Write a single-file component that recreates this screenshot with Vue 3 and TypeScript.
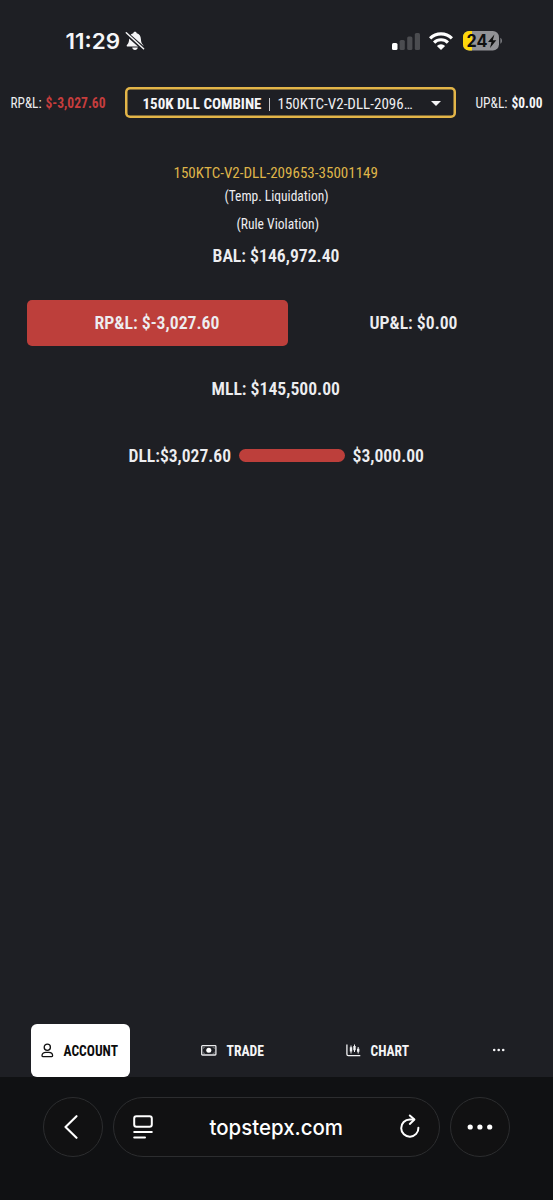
<script setup lang="ts">
import { h, type FunctionalComponent } from 'vue'

interface FitProps {
  text: string
  w: number
  size: number
}

// One line of text condensed or stretched to a known width.
const Fit: FunctionalComponent<FitProps> = (props) =>
  h('svg', { class: 'fit', width: props.w, height: 20, overflow: 'visible' }, [
    h(
      'text',
      {
        x: -0.5,
        y: 15.7,
        'font-size': props.size,
        textLength: props.w,
        lengthAdjust: 'spacingAndGlyphs',
        fill: 'currentColor',
      },
      props.text,
    ),
  ])
Fit.props = ['text', 'w', 'size']

const account = {
  id: '150KTC-V2-DLL-209653-35001149',
  shortId: '150KTC-V2-DLL-2096…',
  plan: '150K DLL COMBINE',
}
</script>

<template>
  <div class="screen">
    <header class="status">
      <Fit class="clock" text="11:29" :w="54.5" :size="21.8" />
      <svg class="bell" width="20" height="20" viewBox="0 0 20 20">
        <path d="M10 .8c-1 0-1.700.7-1.700 1.500C5.600 3 4.200 5 4.100 8c-.1 3.200-.7 4.400-2 5.700-.8.800-.4 1.800.6 1.800h14.600c1 0 1.400-1 .6-1.800-1.300-1.300-1.900-2.500-2-5.700-.1-3-1.500-5-4.200-5.700 0-.8-.7-1.500-1.700-1.500zM7.200 16.500c.2 1.500 1.300 2.500 2.800 2.500s2.600-1 2.800-2.500z" fill="#f4f4f6" />
        <path d="M1 2.200 18.800 18" stroke="#1e1f24" stroke-width="4.200" />
        <path d="M1.300 1.800 18.600 17.800" stroke="#f4f4f6" stroke-width="1.500" stroke-linecap="round" />
      </svg>
      <svg class="signal" width="28" height="18" viewBox="0 0 28 18">
        <rect x="0" y="11" width="5.500" height="7" rx="1.500" fill="#fff" />
        <g fill="#4b4c50">
          <rect x="7.600" y="8" width="5.200" height="10" rx="1.500" />
          <rect x="15.200" y="4.500" width="5.200" height="13.500" rx="1.500" />
          <rect x="22.800" y="1" width="5.200" height="17" rx="1.500" />
        </g>
      </svg>
      <svg class="wifi" width="24" height="18" viewBox="0 0 24 18">
        <g fill="none" stroke="#fff" stroke-width="3.200">
          <path d="M1.100 6.300a15.600 15.600 0 0 1 21.800 0" />
          <path d="M5.100 10.600a9.800 9.800 0 0 1 13.800 0" />
        </g>
        <path d="M12 18 7.900 14a5.800 5.800 0 0 1 8.200 0z" fill="#fff" />
      </svg>
      <svg class="battery" width="40" height="20" viewBox="0 0 40 20">
        <defs>
          <clipPath id="cell"><rect width="36" height="19.500" rx="6.200" /></clipPath>
        </defs>
        <g clip-path="url(#cell)">
          <rect width="36" height="20" fill="#929296" />
          <rect width="9" height="20" fill="#fed70b" />
        </g>
        <path d="M37.300 6.800c2.300.8 2.300 5.200 0 6z" fill="#77787c" />
        <text x="3.600" y="16.200" font-size="17.500" font-weight="700" textLength="21" lengthAdjust="spacingAndGlyphs" fill="#101010">24</text>
        <path d="m31.400 3.500-6.400 7.600h3.500l-1.500 5.800 6.300-7.700h-3.500z" fill="#101010" />
      </svg>
    </header>

    <section class="top">
      <div class="pnl left">
        <Fit text="RP&L:" :w="31" :size="13.800" />
        <Fit class="bold loss" text="$-3,027.60" :w="60" :size="13.800" />
      </div>
      <div class="select">
        <Fit class="bold" :text="account.plan" :w="119" :size="15" />
        <i class="divider"></i>
        <Fit class="short" :text="account.shortId" :w="135" :size="15" />
        <svg class="caret" width="10" height="5" viewBox="0 0 10 5"><path d="M0 0h10L5 5z" fill="#f4f4f6" /></svg>
      </div>
      <div class="pnl right">
        <Fit text="UP&L:" :w="32" :size="13.800" />
        <Fit class="bold" text="$0.00" :w="31" :size="13.800" />
      </div>
    </section>

    <main>
      <Fit class="account" :text="account.id" :w="204.500" :size="15" />
      <Fit class="note" text="(Temp. Liquidation)" :w="104" :size="13.800" />
      <Fit class="note second" text="(Rule Violation)" :w="82.500" :size="13.800" />
      <Fit class="semi bal" text="BAL: $146,972.40" :w="127" :size="17.700" />
      <div class="cards">
        <div class="card red"><Fit class="semi" text="RP&L: $-3,027.60" :w="125" :size="17.700" /></div>
        <div class="card"><Fit class="semi" text="UP&L: $0.00" :w="88" :size="17.700" /></div>
      </div>
      <Fit class="semi mll" text="MLL: $145,500.00" :w="128.500" :size="17.700" />
      <div class="dll">
        <Fit class="semi" text="DLL:$3,027.60" :w="102.500" :size="17.700" />
        <div class="bar"></div>
        <Fit class="semi" text="$3,000.00" :w="71.500" :size="17.700" />
      </div>
    </main>

    <nav>
      <div class="tab active">
        <svg width="13" height="15" viewBox="0 0 13 15" fill="none" stroke="#111" stroke-width="1.300">
          <circle cx="6.300" cy="4.200" r="3.100" />
          <path d="M1 12.800C1 10.600 2.700 9.300 4.800 9.300h3c2.100 0 3.800 1.300 3.800 3.500 0 .5-.3.800-.8.800h-9c-.5 0-.8-.3-.8-.8z" />
        </svg>
        <Fit class="bold" text="ACCOUNT" :w="54.500" :size="14" />
      </div>
      <div class="tab trade">
        <svg width="16" height="11" viewBox="0 0 16 11">
          <rect x=".7" y=".7" width="14.200" height="9.300" rx=".8" fill="none" stroke="#e9e9eb" stroke-width="1.300" />
          <circle cx="7.800" cy="5.300" r="2.500" fill="#fff" />
          <path d="M2.300 4V2.300H4M11.600 2.300h1.700V4M2.300 6.700v1.700H4M11.600 8.400h1.700V6.700" fill="none" stroke="#85868a" stroke-width=".7" />
        </svg>
        <Fit class="bold" text="TRADE" :w="37.500" :size="14" />
      </div>
      <div class="tab chart">
        <svg width="15" height="13" viewBox="0 0 15 13" fill="none" stroke="#f1f1f3">
          <path d="M.9.500v9.700q0 1.400 1.400 1.400h12" stroke-width="1.300" />
          <path d="M5 1.500v8M8.500.5v7.500M12.200 3v6.500" stroke-width="1" />
          <path d="M5 3.300v4.200M8.500 2v4.200M12.200 4.800v3" stroke-width="2.400" />
        </svg>
        <Fit class="bold" text="CHART" :w="38.500" :size="14" />
      </div>
      <svg class="more" width="12" height="4" viewBox="0 0 12 4" fill="#f4f4f6">
        <circle cx="1.200" cy="2" r="1.300" /><circle cx="5.700" cy="2" r="1.300" /><circle cx="10.200" cy="2" r="1.300" />
      </svg>
    </nav>

    <footer>
      <div class="glass round">
        <svg class="back" width="14" height="24" viewBox="0 0 14 24"><path d="M12.500 1.200 1.500 12l11 10.800" fill="none" stroke="#fff" stroke-width="2.100" stroke-linecap="round" stroke-linejoin="round" /></svg>
      </div>
      <div class="glass pill">
        <svg width="20" height="24" viewBox="0 0 20 24" fill="none" stroke="#fff" stroke-width="2" stroke-linecap="round">
          <rect x="1.200" y="1.300" width="17.600" height="10.500" rx="2.200" />
          <path d="M1.200 17.100h17.600M1.200 22.400H12" />
        </svg>
        <Fit class="url" text="topstepx.com" :w="133.500" :size="21.300" />
        <svg class="reload" width="20" height="24" viewBox="0 0 20 24" fill="none" stroke="#fff" stroke-width="2" stroke-linecap="round" stroke-linejoin="round">
          <path d="M18.400 13.700A8.600 8.600 0 1 1 9.800 5.500h4" />
          <path d="m9.800 1.500 4.600 4.100-4.600 4.300" />
        </svg>
      </div>
      <div class="glass round">
        <svg width="26" height="6" viewBox="0 0 26 6" fill="#fff"><circle cx="3.200" cy="3" r="2.600" /><circle cx="12.900" cy="3" r="2.600" /><circle cx="22.700" cy="3" r="2.600" /></svg>
      </div>
    </footer>
  </div>
</template>

<style>
body {
  background: #1e1f24;
}
</style>

<style scoped>
.screen {
  box-sizing: border-box;
  width: 553px;
  height: 1200px;
  display: flex;
  flex-direction: column;
  overflow: hidden;
  background: #1e1f24;
  color: #ededf0;
  font-family: "Roboto Condensed", Roboto, "Liberation Sans", sans-serif;
  font-stretch: 75%;
}
svg {
  display: block;
  flex: none;
}
.bold {
  font-weight: 700;
  color: #f5f5f7;
}
.semi {
  font-weight: 600;
}
.status {
  height: 87px;
  box-sizing: border-box;
  padding: 31px 0 0 65.500px;
  display: flex;
  align-items: flex-start;
  font-family: Inter, "Liberation Sans", sans-serif;
  font-stretch: 100%;
}
.clock {
  margin-top: 2px;
  font-weight: 600;
  color: #f6f6f8;
}
.bell {
  margin-left: 5px;
}
.signal {
  margin: 1px 0 0 247px;
}
.wifi {
  margin: 1px 0 0 9px;
}
.battery {
  margin: 0 0 0 10px;
}
.top {
  height: 31px;
  display: flex;
}
.pnl {
  display: flex;
  padding-top: 5px;
  gap: 4px;
}
.pnl.left {
  width: 114.500px;
  padding-left: 10.500px;
}
.pnl.right {
  padding-left: 20px;
}
.bold.loss {
  color: #c63d3d;
}
.select {
  box-sizing: border-box;
  width: 331px;
  height: 31px;
  box-shadow: inset 0 0 0 2.500px #e3b548;
  border-radius: 5px;
  padding: 5.500px 0 0 18px;
  display: flex;
}
.divider {
  width: 1px;
  height: 13px;
  margin: 5px 8px 0 7px;
  background: #c9c9cc;
}
.caret {
  margin: 8px 0 0 18px;
}
main {
  display: flex;
  flex-direction: column;
  align-items: center;
}
.account {
  margin-top: 44px;
  color: #dfb449;
}
.note {
  margin-top: 3px;
}
.second {
  margin: 7.500px 0 0 3px;
}
.bal {
  margin-top: 13.500px;
}
.cards {
  width: 499px;
  margin-top: 33.500px;
  display: flex;
}
.card {
  flex: 0 0 260.500px;
  height: 46.500px;
  display: flex;
  justify-content: center;
  padding-top: 13px;
  box-sizing: border-box;
  border-radius: 5px;
}
.card:last-child {
  flex-basis: 252px;
}
.red {
  background: #bd3f3b;
}
.mll {
  margin-top: 33px;
}
.dll {
  display: flex;
  margin-top: 46.500px;
}
.bar {
  width: 106px;
  height: 13px;
  margin: 3.500px 7.500px 0 7.500px;
  border-radius: 7px;
  background: #bd3f3b;
}
nav {
  margin-top: auto;
  height: 53.500px;
  display: flex;
  align-items: center;
  padding-left: 30.500px;
}
.tab {
  display: flex;
  align-items: center;
}
.tab .fit {
  margin-top: -1px;
}
.active {
  width: 99px;
  height: 100%;
  box-sizing: border-box;
  padding-left: 10px;
  gap: 10px;
  border-radius: 6px;
  background: #fff;
}
.active .fit {
  color: #0c0c0d;
}
.trade {
  margin-left: 71.500px;
  gap: 10px;
}
.chart {
  margin-left: 81.500px;
  gap: 9.500px;
}
.more {
  margin-left: 83.500px;
}
footer {
  flex: none;
  height: 123px;
  box-sizing: border-box;
  padding: 20px 0 0 43px;
  display: flex;
  gap: 10px;
  background: #101113;
}
.glass {
  height: 60px;
  box-sizing: border-box;
  border: 1px solid #2c2d2f;
  border-radius: 30px;
  display: flex;
  align-items: center;
  background: #111112;
}
.round {
  width: 60px;
  justify-content: center;
}
.back {
  margin-right: 4px;
}
.pill {
  width: 327px;
  padding: 0 19px;
  justify-content: space-between;
}
.url {
  margin-top: 4px;
  font-family: Inter, "Liberation Sans", sans-serif;
  font-stretch: 100%;
  font-weight: 500;
  color: #fff;
}
.reload {
  margin-bottom: 2px;
}
</style>
